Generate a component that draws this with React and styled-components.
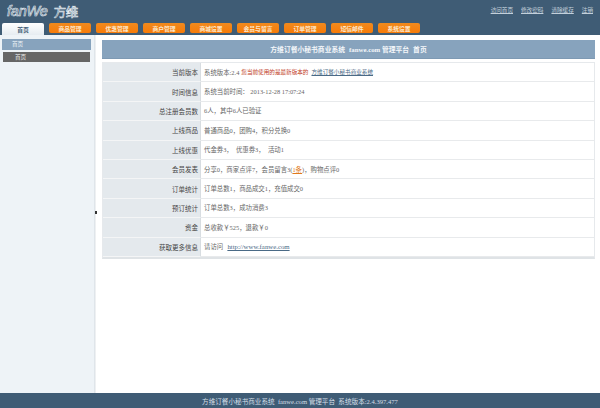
import React from "react";
import styled, { createGlobalStyle } from "styled-components";

const Global = createGlobalStyle`
  html, body { margin: 0; padding: 0; height: 100%; overflow: hidden; background: #fff; }
  #root { height: 408px; }
  * { box-sizing: border-box; }
`;
const Page = styled.div`
  width: 600px; height: 408px; display: flex; flex-direction: column;
  font-family: "Liberation Serif", "Noto Sans CJK SC", serif; color: #555; font-size: 6.5px;
`;
const Header = styled.header`
  height: 35px; flex: none; background: #3f5c75; position: relative; padding: 1px 0 0 7px;
`;
const Logo = styled.div`
  height: 20px; display: flex; align-items: center; gap: 6px; color: #3f5c75;
  -webkit-text-stroke: 0.6px #e6edf3;
`;
const LogoLatin = styled.span`
  font-family: "Liberation Sans", sans-serif; font-style: italic; font-size: 14.5px; letter-spacing: -0.2px;
`;
const LogoCjk = styled.span`
  font-family: "Noto Sans CJK SC", sans-serif; font-size: 12.5px; letter-spacing: -0.5px;
`;
const TopLinks = styled.nav`
  position: absolute; right: 7px; top: 6px; display: flex; gap: 8px;
`;
const TopLink = styled.a`
  color: #c3d0db; text-decoration: underline; font-size: 5.6px; line-height: 8px;
`;
const Tabs = styled.nav`
  position: absolute; left: 2px; top: 23px; display: flex; gap: 5px;
`;
const Tab = styled.a`
  width: 42px; height: ${p => (p.$active ? 12 : 10)}px;
  display: flex; align-items: center; justify-content: center; font-size: 5.8px; border-radius: 2px 2px 0 0;
  ${p => p.$active
    ? "background: linear-gradient(#ffffff, #e6ecf1); color: #3f5c75; font-weight: 700;"
    : "background: linear-gradient(#f08a1e, #f77b08); color: #fde8cc; font-weight: 700; border-radius: 2px;"}
`;
const Body = styled.div`
  flex: 1; display: flex; min-height: 0;
`;
const Sidebar = styled.aside`
  width: 95px; flex: none; background: #eef3f7; padding: 4px 3px 0 2px; border-right: 1px solid #dfe5ea;
`;
const SideGroup = styled.div`
  height: 11px; background: #87a3bd; color: #eef3f7; font-size: 5.6px; line-height: 11px; padding-left: 10px;
`;
const SideItem = styled.div`
  height: 10px; margin: 2px 1px 0; background: #666; color: #e6e6e6; font-size: 5.6px; line-height: 10px; padding-left: 12px;
`;
const Splitter = styled.div`
  width: 7px; flex: none; position: relative; background: #fff;
  border-left: 1px solid #eef0f2;
`;
const Handle = styled.span`
  position: absolute; left: -1px; top: 176px; width: 2px; height: 3px; background: #333;
`;
const Main = styled.main`
  width: 493px; flex: none; padding-top: 5px;
`;
const Title = styled.h1`
  margin: 0; height: 19px; background: #87a3bd; color: #f4f7fa; font-size: 6.8px; font-weight: 700;
  display: flex; align-items: center; justify-content: center; gap: 4px; border-bottom: 1px solid #7d99b3;
`;
const Table = styled.div`
  margin-top: 3px; border: 1px solid #e6e9ec; border-bottom: 2px solid #dfe3e6; display: grid;
  grid-template-columns: 98px 1fr; grid-auto-rows: 19.4px;
`;
const Label = styled.div`
  background: #e4e9ed; color: #444; padding-right: 2px;
  font-size: 6.5px; display: flex; align-items: center; justify-content: flex-end; border-bottom: 1px solid #f4f5f6;
  border-right: 1px solid #d8dde1;
`;
const Value = styled.div`
  padding-left: 3px; font-size: 6.4px; color: #666; display: flex; align-items: center; white-space: pre;
  border-bottom: 1px solid #e8eaec;
`;
const Alert = styled.span`color: #c0391a; font-size: 5.6px; margin: 0 3px 0 2px;`;
const Link = styled.a`color: #4a6a86; text-decoration: underline; font-size: 5.6px;`;
const Url = styled.a`color: #4a6a86; text-decoration: underline; font-size: 6.8px; margin-left: 1px;`;
const Hot = styled.span`color: #e07a1c; text-decoration: underline;`;
const Footer = styled.footer`
  height: 15px; flex: none; background: #3f5c75; color: #d5dfe7; font-size: 6.6px; display: flex;
  align-items: center; justify-content: center; white-space: pre;
`;

const tabs = ["首页", "商品管理", "优惠管理", "商户管理", "商城设置", "会员与留言", "订单管理", "短信邮件", "系统设置"];
const links = ["访问首页", "修改密码", "清除缓存", "注销"];

export default function App() {
  return (
    <Page>
      <Global />
      <Header>
        <Logo>
          <LogoLatin>fanWe</LogoLatin>
          <LogoCjk>方维</LogoCjk>
        </Logo>
        <TopLinks>
          {links.map(l => <TopLink key={l}>{l}</TopLink>)}
        </TopLinks>
        <Tabs>
          {tabs.map((t, i) => <Tab key={t} $active={i === 0}>{t}</Tab>)}
        </Tabs>
      </Header>
      <Body>
        <Sidebar>
          <SideGroup>首页</SideGroup>
          <SideItem>首页</SideItem>
        </Sidebar>
        <Splitter><Handle /></Splitter>
        <Main>
          <Title>
            <span>方维订餐小秘书商业系统</span><span>fanwe.com 管理平台</span><span>首页</span>
          </Title>
          <Table>
            <Label>当前版本</Label>
            <Value>系统版本:2.4<Alert>您当前使用的是最新版本的</Alert><Link>方维订餐小秘书商业系统</Link></Value>
            <Label>时间信息</Label>
            <Value>系统当前时间： 2013-12-28 17:07:24</Value>
            <Label>总注册会员数</Label>
            <Value>6人，其中6人已验证</Value>
            <Label>上线商品</Label>
            <Value>普通商品0，团购4，积分兑换0</Value>
            <Label>上线优惠</Label>
            <Value>代金券3，  优惠券3，  活动1</Value>
            <Label>会员发表</Label>
            <Value>分享0，商家点评7，会员留言3(<Hot>1条</Hot>)，购物点评0</Value>
            <Label>订单统计</Label>
            <Value>订单总数1，商品成交1，充值成交0</Value>
            <Label>预订统计</Label>
            <Value>订单总数3，成功消费3</Value>
            <Label>资金</Label>
            <Value>总收款￥525，退款￥0</Value>
            <Label>获取更多信息</Label>
            <Value>请访问  <Url>http://www.fanwe.com</Url></Value>
          </Table>
        </Main>
      </Body>
      <Footer>方维订餐小秘书商业系统  fanwe.com 管理平台  系统版本:2.4.397.477</Footer>
    </Page>
  );
}
